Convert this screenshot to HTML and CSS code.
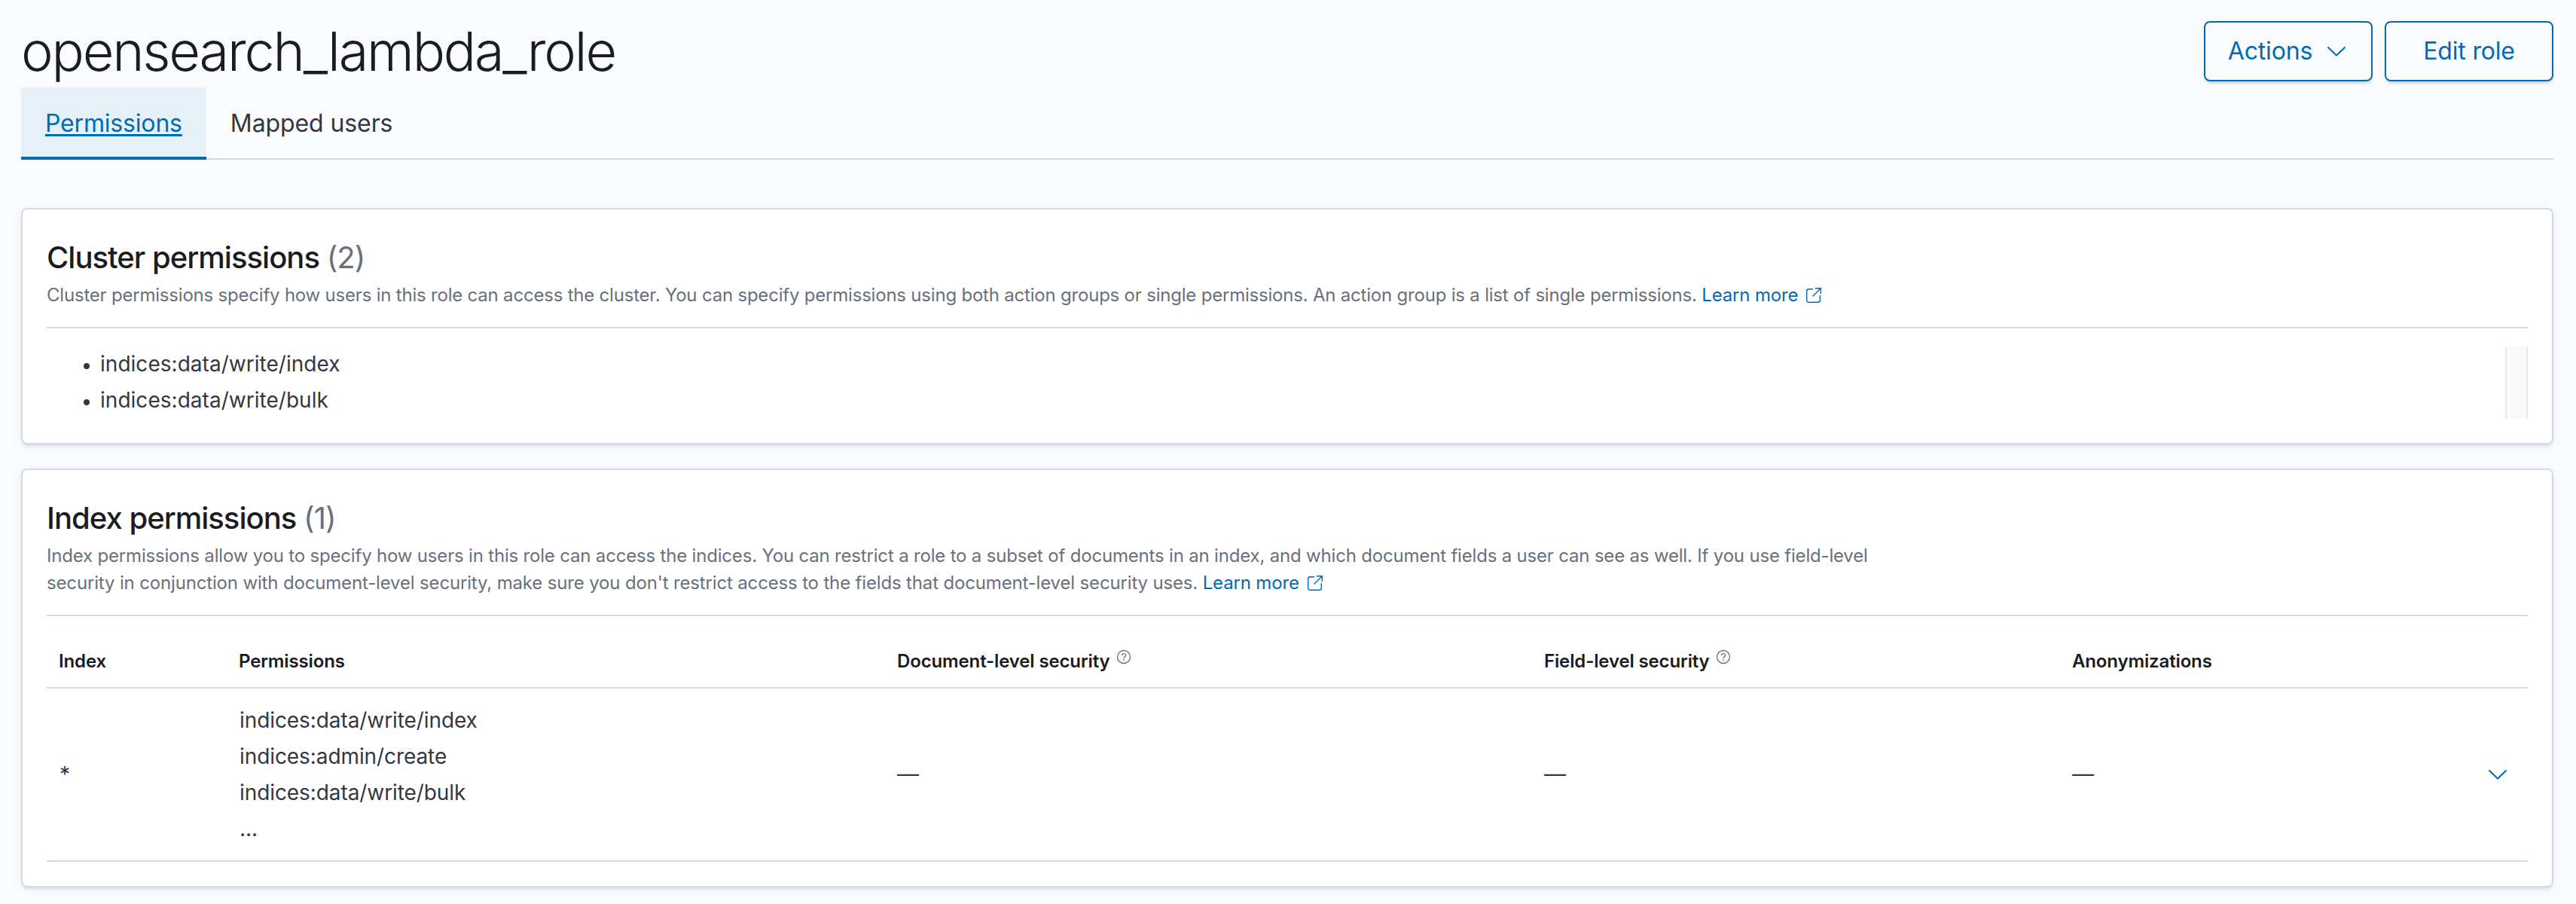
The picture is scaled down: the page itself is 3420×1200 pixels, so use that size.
FILE: index.html
```html
<!DOCTYPE html>
<html lang="en">
<head>
<meta charset="utf-8">
<title>opensearch_lambda_role</title>
<link rel="stylesheet" href="styles.css">
</head>
<body>
<svg class="sprite" aria-hidden="true">
  <symbol id="chevron" viewBox="0 0 32 32"><path d="M5 11 16 21.500 27 11" fill="none" stroke="currentColor" stroke-width="2" stroke-linecap="round" stroke-linejoin="round"/></symbol>
  <symbol id="popout" viewBox="0 0 20 20"><path d="M9 1.700H3.200A2.500 2.500 0 0 0 .7 4.200v12.600A2.500 2.500 0 0 0 3.200 19.300h12.600a2.500 2.500 0 0 0 2.500-2.500V10M12 .7h7.300V8M19.300 .7 8.500 11.500" fill="none" stroke="currentColor" stroke-width="1.400"/></symbol>
  <symbol id="help" viewBox="0 0 20 20"><circle cx="10" cy="10" r="8.500" fill="none" stroke="currentColor" stroke-width="1.300"/><path d="M7.400 8.100C7.400 4.700 12.700 4.800 12.700 7.800 12.700 9.700 10 9.600 10 12" fill="none" stroke="currentColor" stroke-width="1.300"/><circle cx="10" cy="14.200" r=".9" fill="currentColor"/></symbol>
</svg>
<main class="page">
  <header class="page-header">
    <h1 class="page-title">opensearch_lambda_role</h1>
    <div class="actions">
      <button class="button">Actions<svg class="button-icon"><use href="#chevron"/></svg></button>
      <button class="button">Edit role</button>
    </div>
  </header>
  <nav class="tabs">
    <a class="tab tab-selected">Permissions</a>
    <a class="tab">Mapped users</a>
  </nav>
  <section class="panel">
    <h3 class="panel-title">Cluster permissions <span class="count">(2)</span></h3>
    <p class="panel-description"><span class="copy-tight">Cluster permissions specify how users in this role can access the cluster. You can specify permissions using both action groups or single permissions. An action group is a list of single permissions.</span> <a class="link">Learn more<svg class="link-icon"><use href="#popout"/></svg></a></p>
    <hr class="rule">
    <div class="permission-scroll">
      <ul class="permission-list">
        <li>indices:data/write/index</li>
        <li>indices:data/write/bulk</li>
      </ul>
      <div class="scroll-track"></div>
    </div>
  </section>
  <section class="panel">
    <h3 class="panel-title">Index permissions <span class="count">(1)</span></h3>
    <p class="panel-description"><span class="copy-snug">Index permissions allow you to specify how users in this role can access the indices. You can restrict a role to a subset of documents in an index, and which document fields a user can see as well. If you use field-level</span><br>security in conjunction with document-level security, make sure you don't restrict access to the fields that document-level security uses. <a class="link">Learn more<svg class="link-icon"><use href="#popout"/></svg></a></p>
    <hr class="rule">
    <div class="table">
      <div class="row row-head">
        <div>Index</div>
        <div>Permissions</div>
        <div>Document-level security<svg class="help-icon"><use href="#help"/></svg></div>
        <div>Field-level security<svg class="help-icon"><use href="#help"/></svg></div>
        <div>Anonymizations</div>
        <div></div>
      </div>
      <div class="row row-body">
        <div class="cell-index">*</div>
        <div class="cell-list">indices:data/write/index<br>indices:admin/create<br>indices:data/write/bulk<br>...</div>
        <div class="cell-empty">—</div>
        <div class="cell-empty">—</div>
        <div class="cell-empty">—</div>
        <div class="cell-toggle"><svg class="toggle-icon"><use href="#chevron"/></svg></div>
      </div>
    </div>
  </section>
</main>
</body>
</html>
```
FILE: styles.css
```css
* { box-sizing: border-box; }

body {
  margin: 0;
  background: #fafbfd;
  color: #343741;
  font-family: Inter, "Liberation Sans", sans-serif;
  font-size: 28px;
  line-height: 48px;
  letter-spacing: -0.005em;
}

.sprite { display: none; }

.page {
  height: 1200px;
  padding: 28px 30px 0 28px;
}

.page-header {
  display: flex;
  justify-content: space-between;
  height: 88px;
}

.page-title {
  margin: 0;
  color: #1a1c21;
  font-size: 72px;
  font-weight: 300;
  line-height: 80px;
  letter-spacing: -0.0305em;
}

.actions { display: flex; gap: 16px; }

.button {
  display: flex;
  align-items: center;
  justify-content: center;
  gap: 16px;
  width: 224px;
  height: 80px;
  padding: 0;
  border: 2px solid #006bb4;
  border-radius: 8px;
  background: transparent;
  box-shadow: 0 4px 4px -2px rgba(54, 97, 126, .3);
  color: #006bb4;
  font: 400 32px/48px Inter, "Liberation Sans", sans-serif;
  letter-spacing: -0.005em;
}

.button-icon { width: 32px; height: 32px; }

.tabs {
  display: flex;
  height: 96px;
  margin-bottom: 64px;
  box-shadow: inset 0 -2px #d3dae6;
}

.tab {
  padding: 24px 32px 0;
  font-size: 32px;
  line-height: 48px;
  letter-spacing: -0.003em;
}

.tab-selected {
  background: #e6f0f8;
  box-shadow: inset 0 -4px #006bb4;
  color: #006bb4;
  letter-spacing: -0.0055em;
  text-decoration: underline;
  text-decoration-thickness: 3px;
  text-underline-offset: 3px;
}

.panel {
  margin-bottom: 32px;
  padding: 32px;
  border: 2px solid #d3dae6;
  border-radius: 8px;
  background: #fff;
  box-shadow: 0 4px 4px -2px rgba(152, 162, 179, .3), 0 2px 10px rgba(152, 162, 179, .1);
}

.panel-title {
  margin: 0;
  color: #1a1c21;
  font-size: 40px;
  font-weight: 500;
  line-height: 64px;
  letter-spacing: -0.0245em;
}

.count { color: #69707d; font-weight: 400; }

.panel-description {
  margin: 0;
  color: #69707d;
  font-size: 24px;
  line-height: 36px;
  letter-spacing: -0.0066em;
}

.copy-tight { letter-spacing: -0.0086em; }

.copy-snug { letter-spacing: -0.0077em; }

.link { color: #006bb4; }

.link-icon {
  width: 20px;
  height: 20px;
  margin-left: 11px;
  vertical-align: -2px;
}

.rule {
  height: 2px;
  margin: 24px 0;
  border: 0;
  background: #d3dae6;
}

.permission-scroll { display: flex; justify-content: space-between; height: 96px; }

.permission-list {
  margin: -1px 0 0;
  padding: 0 0 0 71px;
  letter-spacing: 0.001em;
}

.permission-list li::marker { font-size: 24px; }

.scroll-track {
  width: 30px;
  border: solid #e8e8e8;
  border-width: 0 2px;
  background: #fafafa;
}

.row {
  display: grid;
  grid-template-columns: 239px 874px 859px 701px 545px 76px;
  align-items: center;
  border-bottom: 2px solid #d3dae6;
}

.row > div { padding-left: 16px; }

.row-head {
  height: 72px;
  padding-top: 2px;
  color: #1a1c21;
  font-size: 24px;
  font-weight: 600;
  line-height: 36px;
}

.help-icon {
  width: 20px;
  height: 20px;
  margin-left: 8px;
  color: #69707d;
  vertical-align: 4px;
}

.row-body { height: 230px; }

.row > .cell-index { padding-left: 17px; }

.row > .cell-list { padding-left: 17px; letter-spacing: -0.003em; }

.row > .cell-empty { font-size: 29px; }

.row > .cell-toggle { display: flex; padding-left: 20px; color: #006bb4; }

.toggle-icon { width: 32px; height: 32px; }
```
